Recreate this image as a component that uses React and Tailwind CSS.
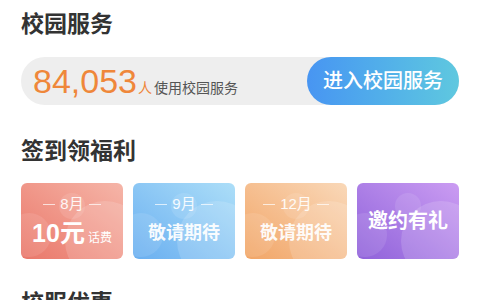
const cjk = "font-['Liberation_Sans','Noto_Sans_CJK_SC',sans-serif]";

const Bubbles = () => (
  <>
    <div className="absolute left-[38px] top-[10px] h-[26px] w-[26px] rounded-full bg-white/10" />
    <div className="absolute -left-[14px] top-[30px] h-[44px] w-[44px] rounded-full bg-white/10" />
    <div className="absolute -right-[22px] top-[18px] h-[80px] w-[80px] rounded-full bg-white/15" />
  </>
);

const Month = ({ label }) => (
  <div className="flex items-center justify-center gap-[5px] text-white/90">
    <span className="h-px w-[12px] bg-white/70" />
    <span className="text-[15px] leading-[18px]">{label}</span>
    <span className="h-px w-[12px] bg-white/70" />
  </div>
);

const cards = [
  { month: "8月", kind: "prize", bg: "from-[#e9776a] to-[#f5b5a8]" },
  { month: "9月", kind: "wait", bg: "from-[#6aaff0] to-[#acdef8]" },
  { month: "12月", kind: "wait", bg: "from-[#f1a566] to-[#f9d8b8]" },
  { month: null, kind: "invite", bg: "from-[#9062da] to-[#cb9cf2]" },
];

export default function App() {
  return (
    <div className={`h-[300px] w-[480px] overflow-hidden bg-white px-[21px] ${cjk}`}>
      <div className="flex h-[48px] items-center text-[23px] font-bold leading-none text-[#333]">
        校园服务
      </div>

      <div className="mt-[9px] flex h-[48px] items-center rounded-full bg-[#eeeeee]">
        <div className="flex flex-1 items-baseline pl-[12px]">
          <span className="text-[34px] leading-none text-[#ef873a]">84,053</span>
          <span className="ml-[1px] text-[14px] text-[#ef873a]">人</span>
          <span className="ml-[2px] text-[14px] text-[#555]">使用校园服务</span>
        </div>
        <button className="flex h-[48px] w-[152px] items-center justify-center rounded-full bg-linear-to-r from-[#4895f2] to-[#5fc8df] text-[20px] font-medium text-white">
          进入校园服务
        </button>
      </div>

      <div className="mt-[22px] flex h-[48px] items-center text-[23px] font-bold leading-none text-[#333]">
        签到领福利
      </div>

      <div className="mt-[8px] grid grid-cols-4 gap-[10px]">
        {cards.map((c, i) => (
          <div
            key={i}
            className={`relative flex h-[76px] flex-col items-center justify-center overflow-hidden rounded-[6px] bg-linear-to-tr ${c.bg} text-white`}
          >
            <Bubbles />
            {c.month && (
              <div className="relative">
                <Month label={c.month} />
              </div>
            )}
            {c.kind === "prize" && (
              <div className="relative mt-[6px] flex items-baseline">
                <span className="text-[25px] font-bold leading-[28px]">10元</span>
                <span className="ml-[3px] text-[12px]">话费</span>
              </div>
            )}
            {c.kind === "wait" && (
              <div className="relative mt-[6px] text-[18px] font-bold leading-[28px] text-white/95">
                敬请期待
              </div>
            )}
            {c.kind === "invite" && (
              <div className="relative text-[20px] font-bold leading-[28px]">邀约有礼</div>
            )}
          </div>
        ))}
      </div>

      <div className="mt-[20px] flex h-[48px] items-center text-[23px] font-bold leading-none text-[#333]">
        校服优惠
      </div>
    </div>
  );
}
